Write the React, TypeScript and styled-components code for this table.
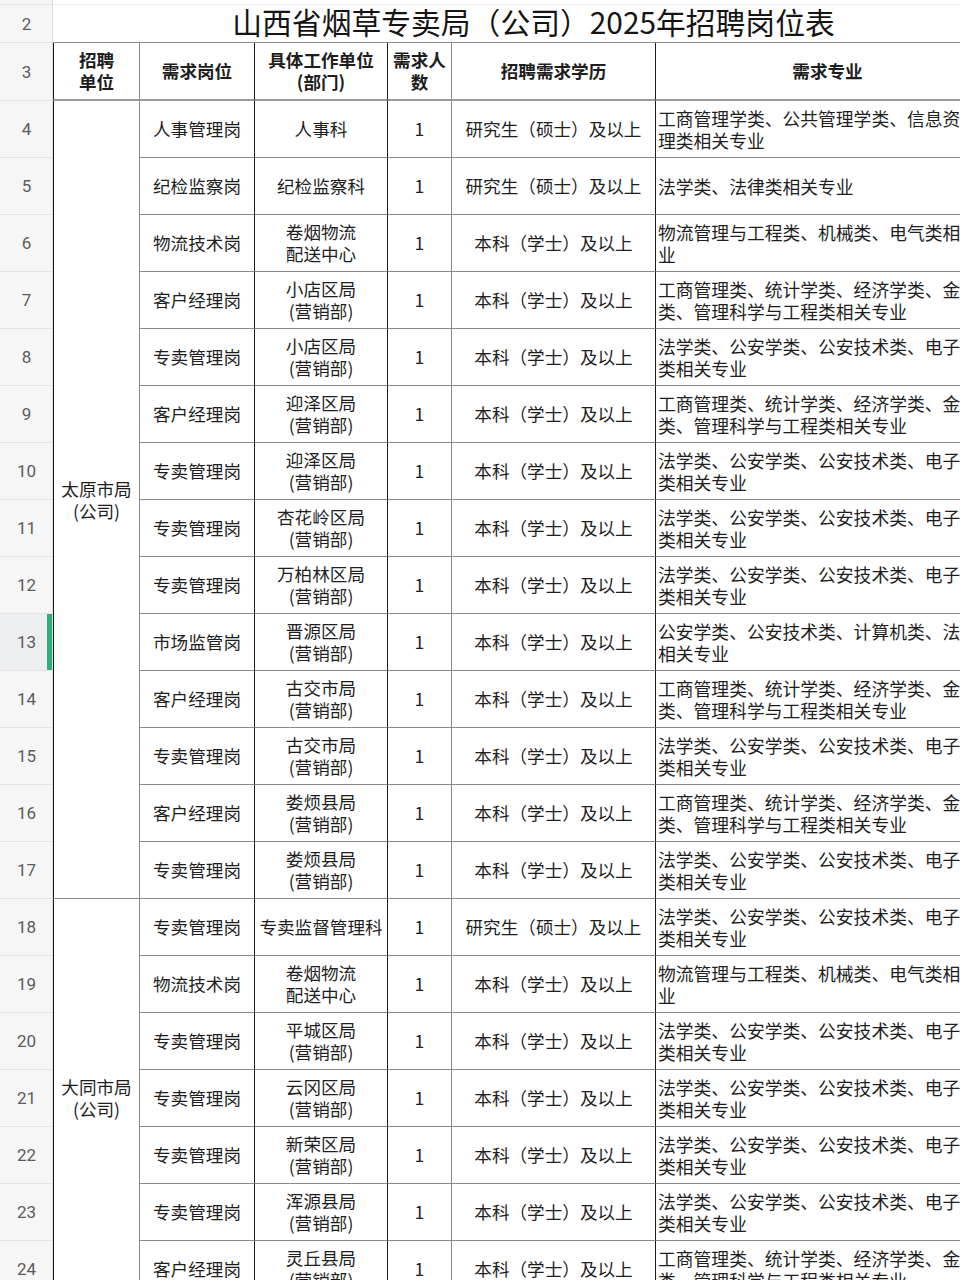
import React from "react";
import styled, { createGlobalStyle, css } from "styled-components";

const Global = createGlobalStyle`
  html, body { margin: 0; padding: 0; background: #fff; overflow: hidden; width: 960px; }
  * { box-sizing: border-box; }
`;

const CJK = `"Noto Sans CJK SC", "Noto Sans", sans-serif`;
const BLACK = "#1a1a1a";
const GRAY = "#8a8a8a";

const Sheet = styled.div`
  display: grid;
  grid-template-columns: 53px 87px 115px 133px 64px 204px 344px;
  grid-template-rows: 5px 38px 58px repeat(21, 57px);
  width: 1000px;
  font-family: ${CJK};
  color: #1e1e1e;
`;

const RowHead = styled.div<{ $active?: boolean }>`
  grid-column: 1;
  display: flex;
  align-items: center;
  justify-content: center;
  background: ${(p) => (p.$active ? "#eceef1" : "#f6f6f6")};
  border-right: 1px solid #dcdcdc;
  border-bottom: 1px solid #e4e4e4;
  font-family: Roboto, "Noto Sans", sans-serif;
  font-size: 17px;
  color: #5c5c5c;
  padding-left: 1px;
  ${(p) =>
    p.$active &&
    css`
      box-shadow: inset -5px 0 0 #2bb07a;
    `}
`;

const TopStrip = styled.div`
  grid-column: 2 / -1;
  border-bottom: 1px solid #ececec;
  background: #fff;
`;

const Title = styled.div`
  grid-column: 2 / -1;
  display: flex;
  align-items: center;
  justify-content: center;
  padding-left: 14px;
  padding-bottom: 5px;
  font-size: 29.8px;
  font-weight: 400;
  color: #141414;
  border-bottom: 1px solid ${GRAY};
  white-space: nowrap;
`;

const cellBase = css<{ $right: string; $span?: number; $first?: boolean }>`
  display: flex;
  flex-direction: column;
  align-items: center;
  justify-content: center;
  text-align: center;
  font-size: 17.6px;
  line-height: 22px;
  border-right: 1px solid ${(p) => p.$right};
  border-bottom: 1px solid ${GRAY};
  white-space: nowrap;
  ${(p) => p.$first && css`border-left: 1.5px solid ${BLACK};`}
  ${(p) => p.$span && css`grid-row: span ${p.$span};`}
`;

const Cell = styled.div<{ $right: string; $span?: number; $first?: boolean }>`
  ${cellBase}
`;

const HeadCell = styled.div<{ $right: string; $span?: number; $first?: boolean }>`
  ${cellBase}
  font-weight: 700;
  border-bottom: 2px solid #9a9a9a;
`;

const MajorCell = styled.div<{ $right: string }>`
  ${cellBase}
  align-items: flex-start;
  text-align: left;
  padding-left: 2px;
  font-size: 17.8px;
  overflow: hidden;
`;

const Line = styled.span`
  display: block;
`;

const COLS_RIGHT = [GRAY, BLACK, BLACK, GRAY, BLACK, GRAY];

const M_GS = "工商管理类、统计学类、经济学类、金融学类、管理科学与工程类相关专业";
const M_FX = "法学类、公安学类、公安技术类、电子信息类相关专业";
const M_WL = "物流管理与工程类、机械类、电气类相关专业";
const YJS = "研究生（硕士）及以上";
const BK = "本科（学士）及以上";
const YX = "(营销部)";

type Row = { n: number; post: string; unit: string[]; edu: string; major: string };

const rowsTY: Row[] = [
  { n: 4, post: "人事管理岗", unit: ["人事科"], edu: YJS, major: "工商管理学类、公共管理学类、信息资源管理类相关专业" },
  { n: 5, post: "纪检监察岗", unit: ["纪检监察科"], edu: YJS, major: "法学类、法律类相关专业" },
  { n: 6, post: "物流技术岗", unit: ["卷烟物流", "配送中心"], edu: BK, major: M_WL },
  { n: 7, post: "客户经理岗", unit: ["小店区局", YX], edu: BK, major: M_GS },
  { n: 8, post: "专卖管理岗", unit: ["小店区局", YX], edu: BK, major: M_FX },
  { n: 9, post: "客户经理岗", unit: ["迎泽区局", YX], edu: BK, major: M_GS },
  { n: 10, post: "专卖管理岗", unit: ["迎泽区局", YX], edu: BK, major: M_FX },
  { n: 11, post: "专卖管理岗", unit: ["杏花岭区局", YX], edu: BK, major: M_FX },
  { n: 12, post: "专卖管理岗", unit: ["万柏林区局", YX], edu: BK, major: M_FX },
  { n: 13, post: "市场监管岗", unit: ["晋源区局", YX], edu: BK, major: "公安学类、公安技术类、计算机类、法学类相关专业" },
  { n: 14, post: "客户经理岗", unit: ["古交市局", YX], edu: BK, major: M_GS },
  { n: 15, post: "专卖管理岗", unit: ["古交市局", YX], edu: BK, major: M_FX },
  { n: 16, post: "客户经理岗", unit: ["娄烦县局", YX], edu: BK, major: M_GS },
  { n: 17, post: "专卖管理岗", unit: ["娄烦县局", YX], edu: BK, major: M_FX },
];

const rowsDT: Row[] = [
  { n: 18, post: "专卖管理岗", unit: ["专卖监督管理科"], edu: YJS, major: M_FX },
  { n: 19, post: "物流技术岗", unit: ["卷烟物流", "配送中心"], edu: BK, major: M_WL },
  { n: 20, post: "专卖管理岗", unit: ["平城区局", YX], edu: BK, major: M_FX },
  { n: 21, post: "专卖管理岗", unit: ["云冈区局", YX], edu: BK, major: M_FX },
  { n: 22, post: "专卖管理岗", unit: ["新荣区局", YX], edu: BK, major: M_FX },
  { n: 23, post: "专卖管理岗", unit: ["浑源县局", YX], edu: BK, major: M_FX },
  { n: 24, post: "客户经理岗", unit: ["灵丘县局", YX], edu: BK, major: M_GS },
];

const splitMajor = (s: string) => {
  const chars = Array.from(s);
  if (chars.length <= 19) return [s];
  return [chars.slice(0, 19).join(""), chars.slice(19).join("")];
};

const DataRow: React.FC<{ row: Row; group?: { name: string[]; span: number } }> = ({ row, group }) => (
  <>
    <RowHead $active={row.n === 13}>{row.n}</RowHead>
    {group && (
      <Cell $right={COLS_RIGHT[0]} $first $span={group.span}>
        {group.name.map((l) => (
          <Line key={l}>{l}</Line>
        ))}
      </Cell>
    )}
    <Cell $right={COLS_RIGHT[1]}>{row.post}</Cell>
    <Cell $right={COLS_RIGHT[2]}>
      {row.unit.map((l, i) => (
        <Line key={i}>{l}</Line>
      ))}
    </Cell>
    <Cell $right={COLS_RIGHT[3]}>1</Cell>
    <Cell $right={COLS_RIGHT[4]}>{row.edu}</Cell>
    <MajorCell $right={COLS_RIGHT[5]}>
      {splitMajor(row.major).map((l, i) => (
        <Line key={i}>{l}</Line>
      ))}
    </MajorCell>
  </>
);

export default function App() {
  return (
    <>
      <Global />
      <Sheet>
        <RowHead />
        <TopStrip />
        <RowHead>2</RowHead>
        <Title>山西省烟草专卖局（公司）2025年招聘岗位表</Title>
        <RowHead>3</RowHead>
        <HeadCell $right={COLS_RIGHT[0]} $first>
          <Line>招聘</Line>
          <Line>单位</Line>
        </HeadCell>
        <HeadCell $right={COLS_RIGHT[1]}>需求岗位</HeadCell>
        <HeadCell $right={COLS_RIGHT[2]}>
          <Line>具体工作单位</Line>
          <Line>(部门)</Line>
        </HeadCell>
        <HeadCell $right={COLS_RIGHT[3]}>
          <Line>需求人</Line>
          <Line>数</Line>
        </HeadCell>
        <HeadCell $right={COLS_RIGHT[4]}>招聘需求学历</HeadCell>
        <HeadCell $right={COLS_RIGHT[5]}>需求专业</HeadCell>
        {rowsTY.map((r, i) => (
          <DataRow
            key={r.n}
            row={r}
            group={i === 0 ? { name: ["太原市局", "(公司)"], span: rowsTY.length } : undefined}
          />
        ))}
        {rowsDT.map((r, i) => (
          <DataRow
            key={r.n}
            row={r}
            group={i === 0 ? { name: ["大同市局", "(公司)"], span: rowsDT.length } : undefined}
          />
        ))}
      </Sheet>
    </>
  );
}
